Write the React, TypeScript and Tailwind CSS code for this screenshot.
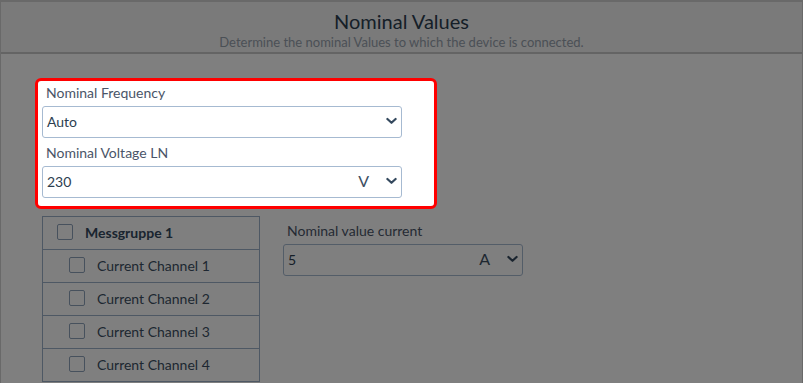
import React from "react";

const CHANNELS = ["Current Channel 1", "Current Channel 2", "Current Channel 3", "Current Channel 4"];

function Chevron() {
  return (
    <svg width="11" height="8" viewBox="0 0 11 8" aria-hidden>
      <path d="M1.4 2 L5.5 5.8 L9.6 2" fill="none" stroke="#34495e" strokeWidth="2.2" strokeLinecap="round" strokeLinejoin="round" />
    </svg>
  );
}

function Select({ value, unit, width }: { value: string; unit?: string; width: string }) {
  return (
    <div className={`flex h-[32px] items-center rounded-[3px] border border-[#a6bad1] bg-white pb-[2px] pl-[4px] pr-[4px] text-[14px] text-[#2c3e50] ${width}`}>
      <span className="flex-1">{value}</span>
      {unit && <span className="mr-[17px] text-[16px] text-[#3d4f63]">{unit}</span>}
      <Chevron />
    </div>
  );
}

function Checkbox() {
  return <span className="block h-[16px] w-[16px] rounded-[2px] border-[1.5px] border-[#8fa3bb] bg-white" />;
}

export default function App() {
  return (
    <div className="relative h-[383px] w-[803px] overflow-hidden bg-white font-['Lato',sans-serif] text-[#2c3e50]">
      <div className="h-full border-x border-t-2 border-[#d2d2d2]">
        <header className="flex h-[52px] flex-col items-center border-b-2 border-[#c8c8c8] bg-[#f4f4f4] pt-[6px]">
          <h1 className="text-[20px] leading-[26px] text-[#2c3e50]">Nominal Values</h1>
          <p className="text-[13px] leading-[16px] text-[#97a1ad]">Determine the nominal Values to which the device is connected.</p>
        </header>

        <div className="pl-[34px] pt-[24px]">
          <section className="relative z-20 w-[402px] rounded-[6px] border-[3px] border-[#ff0000] bg-white pb-[8px] pl-[4px] pt-[2px]">
            <label className="block pl-[4px] text-[14px] leading-[20px] text-[#4a5568]">Nominal Frequency</label>
            <div className="mt-[3px]">
              <Select value="Auto" width="w-[360px]" />
            </div>
            <label className="mt-[5px] block pl-[4px] text-[14px] leading-[20px] text-[#4a5568]">Nominal Voltage LN</label>
            <div className="mt-[3px]">
              <Select value="230" unit="V" width="w-[360px]" />
            </div>
          </section>

          <div className="mt-[7px] flex gap-[23px] pl-[7px]">
            <div className="w-[218px] border-x border-t border-[#9cb0c8]">
              <div className="flex h-[33px] items-center gap-[12px] border-b border-[#9cb0c8] pb-[2px] pl-[14px]">
                <Checkbox />
                <span className="text-[14px] font-bold text-[#34495e]">Messgruppe 1</span>
              </div>
              {CHANNELS.map((c) => (
                <div key={c} className="flex h-[33px] items-center gap-[12px] border-b border-[#9cb0c8] pb-[2px] pl-[26px]">
                  <Checkbox />
                  <span className="text-[14px] text-[#3d4f63]">{c}</span>
                </div>
              ))}
            </div>
            <div className="pt-[5px]">
              <label className="block pl-[4px] text-[14px] leading-[20px] text-[#4a5568]">Nominal value current</label>
              <div className="mt-[3px]">
                <Select value="5" unit="A" width="w-[240px]" />
              </div>
            </div>
          </div>
        </div>
      </div>
      <div className="absolute inset-0 z-10 bg-black/50" />
    </div>
  );
}
